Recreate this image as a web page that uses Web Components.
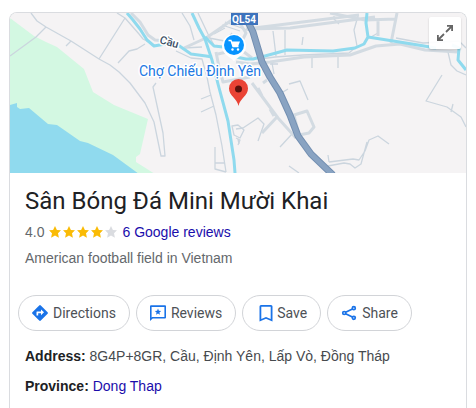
<!DOCTYPE html>
<html lang="en">
<head>
<meta charset="utf-8">
<meta name="viewport" content="width=device-width, initial-scale=1">
<title>Sân Bóng Đá Mini Mười Khai</title>
<style>
    body {
        margin: 0;
        background: #fff;
        font: 14px/20px "Liberation Sans", Arial, sans-serif;
        color: #474a4e;
    }
</style>
</head>
<body>
<place-card>
    <place-map slot="map"></place-map>
    <place-header name="Sân Bóng Đá Mini Mười Khai" rating="4.0" reviews="6 Google reviews">American football field in Vietnam</place-header>
    <place-actions>
        <place-action icon="directions">Directions</place-action>
        <place-action icon="reviews">Reviews</place-action>
        <place-action icon="save">Save</place-action>
        <place-action icon="share">Share</place-action>
    </place-actions>
    <place-fact label="Address">8G4P+8GR, Cầu, Định Yên, Lấp Vò, Đồng Tháp</place-fact>
    <place-fact label="Province" href="#dong-thap">Dong Thap</place-fact>
</place-card>

<template id="card-template">
<style>
    :host {
        display: block;
        padding: 12px 9px 0;
    }

    .card {
        box-sizing: border-box;
        min-height: calc(100vh - 12px);
        border: 1px solid #dadce0;
        border-bottom: 0;
        border-radius: 8px 8px 0 0;
        overflow: hidden;
    }

    .content {
        padding: 12px 15px 0;
    }
</style>
<article class="card">
    <slot name="map"></slot>
    <div class="content"><slot></slot></div>
</article>
</template>

<template id="map-template">
<style>
    :host {
        display: block;
        position: relative;
        height: 160px;
        background: #f5f3f4;
    }

    .map {
        display: block;
        width: 100%;
        height: 100%;
    }

    .map text {
        font-family: Roboto, "Noto Sans", sans-serif;
    }

    .road, .lane, .canal, .highway {
        fill: none;
        stroke-linejoin: round;
    }

    .road { stroke: #d3dbe2; stroke-width: 3; }
    .lane { stroke: #cbd5de; stroke-width: 1.3; }
    .canal { stroke: #8fdaee; stroke-width: 3; }
    .highway { stroke: #738fb1; stroke-width: 7; }
    .highway.inner { stroke: #89a3c2; stroke-width: 5; }

    .halo {
        paint-order: stroke;
        stroke: #fff;
        stroke-width: 3px;
        stroke-linejoin: round;
    }

    .expand {
        position: absolute;
        top: 4px;
        right: 5px;
        width: 32px;
        height: 32px;
        padding: 0;
        border: 0;
        border-radius: 2px;
        background: #fffffff0;
        box-shadow: 0 1px 2px #0003;
        cursor: pointer;
    }

    .expand svg {
        display: block;
        margin: auto;
    }
</style>
<svg class="map" viewBox="10 13 456 160" preserveAspectRatio="xMidYMid slice" role="img" aria-label="Map">
    <rect x="10" y="13" width="456" height="160" fill="#f5f3f4"/>
    <path fill="#d3f8e2" d="M10 18 22 27 34 36 46 42 57 47 84 69 93 92 114 105 148 119 140 154 136 157V162L155 174H10Z"/>
    <path fill="#90daee" d="M10 105 17 103V107L20 109 29 108 48 124 57 125 80 141 88 143 113 155 139 174H10Z"/>

    <path class="lane" d="M31 13 37 21 46 27 71 41 99 59 110 65 119 72 130 83 145 103 154 122 161 156H165L163 133 153 87 156 83M10 56 36 37 46 27M71 41 66 46M125 18 99 59M117 13 125 18 139 34 143 39 156 46M118 63 129 51 137 49 145 44"/>
    <path class="lane" d="M182 13 190 26 194 40M184 48 202 47M176 51 191 58 202 59 207 77 210 92 216 115 222 146 226 172M201 99 211 95M201 112 214 106M215 147V169L226 172M215 163H225"/>
    <path class="lane" d="M198 13 208 34 215 47M204 37 240 44M222 25 240 31M225 22 250 31M214 34 225 28M232 33 225 42M232 126 238 125 244 130 240 138 234 135ZM238 139 239 144"/>
    <path class="lane" d="M273 31 276 56M285 30V55M303 37 302 45M260 59 275 57 303 55 349 53 357 46 354 30 358 16M334 16 334 19 339 24M312 57V68M338 56V68M396 38 423 43 459 41 466 48M378 33 371 37M448 52 451 65 457 71 466 75"/>
    <path class="lane" d="M442 75 426 101 447 107 461 117 466 127M453 104 451 112M236 129 243 128 258 118 264 124 258 141M236 138 240 140 238 145M292 134 280 147M289 166 299 173M289 84 300 81 308 100M283 92 288 89M329 162 353 159 359 160 365 151 369 140 378 136 389 144M328 166 344 163 350 164 355 168 361 164 367 142M328 155 329 162M272 63 274 74M270 64 278 64"/>
    <path class="road" d="M131 13 140 22 148 35 155 40 165 41M184 48 206 38 222 27 240 14M246 29 290 28 375 17M330 13 365 20 396 19M378 20V36M397 13 391 43M246 29 359 15M236 62 250 64 270 62 304 57 350 55 376 46 400 44 425 50 458 52"/>
    <path class="road" d="M236 17 246 33 240 45M218 54 240 49 252 58M216 52 219 67 223 82 250 77M252 83 278 118 296 138M277 117 262 133M294 115 307 111 314 127 309 133 299 135ZM263 83 267 80M258 88 262 96M270 109 274 116"/>
    <path class="canal" d="M127 13 133 20 140 29 147 40 154 46 171 43 178 45 191 54 206 56 212 57M205 37 214 46 223 47M236 57 246 59 253 59 265 56 287 50 333 51 355 48 364 44 368 37 412 44 436 48M368 37 366 23 367 13M452 45 459 48 458 60 466 70"/>
    <path class="canal" d="M192 13 199 28 205 39 212 60 218 84 228 121 234 160 235 173"/>
    <path class="highway" d="M247 20 253 32 262 62 270 77 280 93 290 115 298 136 311 154 333 175"/>
    <path class="highway inner" d="M247 20 253 32 262 62 270 77 280 93 290 115 298 136 311 154 333 175"/>

    <rect x="231" y="13" width="27" height="12" fill="#3d73bd"/>
    <text x="244" y="23" text-anchor="middle" font-size="10" font-weight="700" fill="#fff">QL54</text>
    <text class="halo" transform="translate(159 43) rotate(16)" font-size="11" font-weight="500" fill="#3c4f66">Cầu</text>

    <path fill="#fff" d="M222 46A12 12 0 0 1 246 46C246 54 239 56 234 61 229 56 222 54 222 46Z"/>
    <circle cx="234" cy="45" r="10" fill="#0794ff"/>
    <path fill="none" stroke="#fff" stroke-width="1.300" d="M228.500 40.500H231L233 46.500H238.500"/>
    <path fill="#fff" d="M231 41.500H240L238 46.500H233Z"/>
    <circle cx="232.500" cy="49.500" r="1.200" fill="#fff"/>
    <circle cx="238" cy="49.500" r="1.200" fill="#fff"/>
    <text class="halo" x="139" y="76" font-size="14" fill="#2078e3">Chợ Chiếu Định Yên</text>

    <path fill="#ea4335" d="M238.500 106C237 98 229 96 229 88.500A9.500 9.500 0 0 1 248 88.500C248 96 240 98 238.500 106Z"/>
    <circle cx="238.500" cy="89" r="3.500" fill="#5b110c"/>
</svg>
<button class="expand" type="button" aria-label="Expand map">
    <svg width="18" height="18" viewBox="0 0 18 18" fill="none" stroke="#666" stroke-width="1.800"><path d="M10 8 16 2M11 1.900H16.100V7M8 10 2 16M1.900 11V16.100H7"/></svg>
</button>
</template>

<template id="header-template">
<style>
    :host {
        display: block;
    }

    h1 {
        margin: 0;
        font: 400 24px/32px Roboto, "Noto Sans", sans-serif;
        color: #202124;
    }

    .rating {
        display: flex;
        align-items: center;
        gap: 5px;
        margin-top: 5px;
        color: #64686c;
    }

    .stars {
        display: flex;
        gap: 2px;
    }

    .stars svg {
        width: 12px;
        height: 12px;
        fill: #fabb05;
    }

    .stars svg:last-child {
        fill: #dadce0;
    }

    a {
        color: #1a0dab;
        text-decoration: none;
    }

    p {
        margin: 6px 0 0;
        color: #64686c;
    }
</style>
<h1></h1>
<div class="rating">
    <span class="score"></span>
    <span class="stars" aria-hidden="true"></span>
    <a href="#reviews"></a>
</div>
<p><slot></slot></p>
</template>

<template id="actions-template">
<style>
    :host {
        display: flex;
        flex-wrap: wrap;
        gap: 6px;
        margin: 27px -7px 15px;
    }
</style>
<slot></slot>
</template>

<template id="action-template">
<style>
    :host {
        display: block;
    }

    button {
        display: flex;
        align-items: center;
        gap: 3px;
        height: 36px;
        padding: 0 13px 0 11px;
        border: 1px solid #d2d4d8;
        border-radius: 18px;
        background: #fff;
        font: 14px/20px Roboto, sans-serif;
        color: #4d5156;
        cursor: pointer;
    }

    svg {
        width: 20px;
        height: 20px;
        fill: #1a73e8;
    }
</style>
<button type="button">
    <svg viewBox="0 0 20 20" aria-hidden="true"></svg>
    <slot></slot>
</button>
</template>

<template id="fact-template">
<style>
    :host {
        display: block;
        margin-bottom: 10px;
    }

    b {
        color: #202124;
    }

    a {
        color: #1a0dab;
        text-decoration: none;
    }
</style>
<b></b> <span class="value"><slot></slot></span>
</template>

<script>
const STAR = '<svg viewBox="0 0 12 12"><path d="M6 0 7.900 3.900 12 4.300 9 7.200 9.900 11.700 6 9.500 2.100 11.700 3 7.200 0 4.300 4.100 3.900Z"/></svg>';

const ICONS = {
    directions: '<path fill-rule="evenodd" d="M9.200 2.400Q10 1.600 10.800 2.400L17.600 9.200Q18.400 10 17.600 10.800L10.800 17.600Q10 18.400 9.200 17.600L2.400 10.800Q1.600 10 2.400 9.200ZM6.500 9V12.500H8.200V10.200H11V12.200L14 9.300 11 6.400V8.500H7Q6.500 8.500 6.500 9Z"/>',
    reviews: '<path fill-rule="evenodd" d="M3 2.300H17Q18 2.300 18 3.300V14.500Q18 15.500 17 15.500H4.700L2 18V3.300Q2 2.300 3 2.300ZM3.600 3.900V14.500L4.200 13.900H16.400V3.900Z"/><path d="M10 5.600 10.900 7.800 13.200 8 11.400 9.500 12 11.800 10 10.600 8 11.800 8.600 9.500 6.800 8 9.100 7.800Z"/>',
    save: '<path fill-rule="evenodd" d="M7 2H17Q18.500 2 18.500 3.500V18.500L12 15.700 5.500 18.500V3.500Q5.500 2 7 2ZM7.300 3.700V15.900L12 13.900 16.700 15.900V3.700Z"/>',
    share: '<g fill="none" stroke="#1a73e8" stroke-width="1.700"><path d="M6.600 9.200 13.400 6.100M6.600 10.800 13.400 13.900"/><circle cx="5.200" cy="10" r="1.500"/><circle cx="14.800" cy="5.200" r="1.500"/><circle cx="14.800" cy="14.800" r="1.500"/></g>',
};

function attach(el, id) {
    const root = el.attachShadow({ mode: 'open' });
    root.appendChild(document.getElementById(id).content.cloneNode(true));
    return root;
}

class PlaceCard extends HTMLElement {
    constructor() {
        super();
        attach(this, 'card-template');
    }
}

class PlaceMap extends HTMLElement {
    constructor() {
        super();
        attach(this, 'map-template');
    }
}

class PlaceHeader extends HTMLElement {
    connectedCallback() {
        const root = attach(this, 'header-template');
        root.querySelector('h1').textContent = this.getAttribute('name');
        root.querySelector('.score').textContent = this.getAttribute('rating');
        root.querySelector('.stars').innerHTML = STAR.repeat(5);
        root.querySelector('a').textContent = this.getAttribute('reviews');
    }
}

class PlaceActions extends HTMLElement {
    constructor() {
        super();
        attach(this, 'actions-template');
    }
}

class PlaceAction extends HTMLElement {
    connectedCallback() {
        const root = attach(this, 'action-template');
        root.querySelector('svg').innerHTML = ICONS[this.getAttribute('icon')];
    }
}

class PlaceFact extends HTMLElement {
    connectedCallback() {
        const root = attach(this, 'fact-template');
        root.querySelector('b').textContent = this.getAttribute('label') + ':';

        // linked facts wrap their value in an anchor
        if (this.hasAttribute('href')) {
            const link = document.createElement('a');
            link.href = this.getAttribute('href');
            link.appendChild(root.querySelector('slot'));
            root.querySelector('.value').appendChild(link);
        }
    }
}

customElements.define('place-card', PlaceCard);
customElements.define('place-map', PlaceMap);
customElements.define('place-header', PlaceHeader);
customElements.define('place-actions', PlaceActions);
customElements.define('place-action', PlaceAction);
customElements.define('place-fact', PlaceFact);
</script>
</body>
</html>
